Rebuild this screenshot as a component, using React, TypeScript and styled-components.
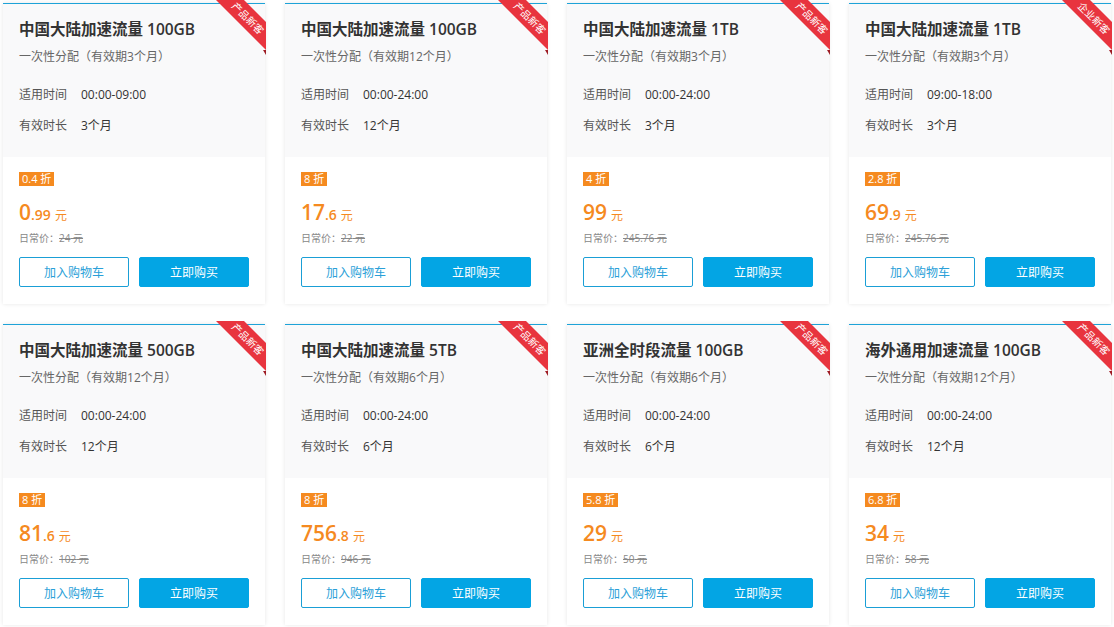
import styled, { createGlobalStyle } from "styled-components";

const GlobalStyle = createGlobalStyle`
  body {
    margin: 0;
    background: #fff;
    font-family: "Open Sans", "Noto Sans CJK SC", sans-serif;
  }
`;

const Grid = styled.div`
  padding: 3px;
  display: grid;
  grid-template-columns: repeat(4, 1fr);
  gap: 20px;
`;

const Card = styled.div`
  position: relative;
  background: #fff;
  border-top: 1px solid #1ea3d8;
  box-shadow: 0 0 4px rgba(0, 0, 0, 0.1);
`;

const Head = styled.div`
  background: #f9f9fa;
  padding: 13px 16px 22px;
`;

const Title = styled.h3`
  margin: 0;
  font-size: 15.5px;
  line-height: 24px;
  font-weight: 600;
  color: #333;
`;

const Sub = styled.div`
  margin-top: 7px;
  font-size: 12px;
  line-height: 18px;
  color: #666;
`;

const Specs = styled.div`
  margin-top: 20px;
  display: flex;
  flex-direction: column;
  gap: 13px;
`;

const Spec = styled.div`
  display: flex;
  font-size: 12px;
  line-height: 18px;
  color: #333;
`;

const SpecLabel = styled.span`
  width: 62px;
  color: #555;
`;

const Body = styled.div`
  padding: 15px 16px 17px;
`;

const Badge = styled.div`
  width: fit-content;
  background: #f58a1f;
  color: #fff;
  font-size: 11px;
  line-height: 14px;
  height: 14px;
  padding: 0 3px;
`;

const Price = styled.div`
  margin-top: 13px;
  color: #f58a1f;
  line-height: 26px;
  height: 26px;
`;

const PriceInt = styled.span`
  font-size: 21px;
  font-weight: 600;
`;

const PriceDec = styled.span`
  font-size: 14px;
  font-weight: 600;
`;

const Unit = styled.span`
  font-size: 12px;
  margin-left: 4px;
`;

const Orig = styled.div`
  margin-top: 6px;
  font-size: 10px;
  line-height: 14px;
  color: #888;
`;

const Actions = styled.div`
  margin-top: 12px;
  display: flex;
  gap: 10px;
`;

const Btn = styled.button<{ $primary?: boolean }>`
  flex: 1;
  height: 30px;
  border-radius: 2px;
  font-family: inherit;
  font-size: 12px;
  cursor: pointer;
  border: 1px solid ${(p) => (p.$primary ? "#03a5e4" : "#1a9fd6")};
  background: ${(p) => (p.$primary ? "#03a5e4" : "#fff")};
  color: ${(p) => (p.$primary ? "#fff" : "#2a9fd8")};
`;

/* diagonal corner ribbon, drawn as a clipped band */
const Ribbon = styled.div`
  position: absolute;
  top: -4px;
  right: -1px;
  width: 52px;
  height: 54px;
  background: #e8343e;
  clip-path: polygon(2px 0, 30px 0, 52px 22px, 52px 50px);
`;

const RibbonText = styled.span`
  position: absolute;
  left: 34px;
  top: 18px;
  white-space: nowrap;
  color: #fff;
  font-size: 10px;
  line-height: 12px;
  transform: translate(-50%, -50%) rotate(45deg);
`;

const Fold = styled.div`
  position: absolute;
  top: 46px;
  right: -1px;
  width: 0;
  height: 0;
  border-top: 5px solid #9e1c24;
  border-left: 3px solid transparent;
`;

interface IPlan {
  title: string;
  period: string;
  time: string;
  duration: string;
  discount: string;
  int: string;
  dec?: string;
  orig: string;
  tag: string;
}

const plans: IPlan[] = [
  { title: "中国大陆加速流量 100GB", period: "3个月", time: "00:00-09:00", duration: "3个月", discount: "0.4", int: "0", dec: ".99", orig: "24", tag: "产品新客" },
  { title: "中国大陆加速流量 100GB", period: "12个月", time: "00:00-24:00", duration: "12个月", discount: "8", int: "17", dec: ".6", orig: "22", tag: "产品新客" },
  { title: "中国大陆加速流量 1TB", period: "3个月", time: "00:00-24:00", duration: "3个月", discount: "4", int: "99", orig: "245.76", tag: "产品新客" },
  { title: "中国大陆加速流量 1TB", period: "3个月", time: "09:00-18:00", duration: "3个月", discount: "2.8", int: "69", dec: ".9", orig: "245.76", tag: "企业新客" },
  { title: "中国大陆加速流量 500GB", period: "12个月", time: "00:00-24:00", duration: "12个月", discount: "8", int: "81", dec: ".6", orig: "102", tag: "产品新客" },
  { title: "中国大陆加速流量 5TB", period: "6个月", time: "00:00-24:00", duration: "6个月", discount: "8", int: "756", dec: ".8", orig: "946", tag: "产品新客" },
  { title: "亚洲全时段流量 100GB", period: "6个月", time: "00:00-24:00", duration: "6个月", discount: "5.8", int: "29", orig: "50", tag: "产品新客" },
  { title: "海外通用加速流量 100GB", period: "12个月", time: "00:00-24:00", duration: "12个月", discount: "6.8", int: "34", orig: "58", tag: "产品新客" },
];

function PlanCard({ plan }: { plan: IPlan }) {
  return (
    <Card>
      <Ribbon>
        <RibbonText>{plan.tag}</RibbonText>
      </Ribbon>
      <Fold />
      <Head>
        <Title>{plan.title}</Title>
        <Sub>一次性分配（有效期{plan.period}）</Sub>
        <Specs>
          <Spec>
            <SpecLabel>适用时间</SpecLabel>
            {plan.time}
          </Spec>
          <Spec>
            <SpecLabel>有效时长</SpecLabel>
            {plan.duration}
          </Spec>
        </Specs>
      </Head>
      <Body>
        <Badge>{plan.discount} 折</Badge>
        <Price>
          <PriceInt>{plan.int}</PriceInt>
          {plan.dec && <PriceDec>{plan.dec}</PriceDec>}
          <Unit>元</Unit>
        </Price>
        <Orig>
          日常价：<s>{plan.orig} 元</s>
        </Orig>
        <Actions>
          <Btn>加入购物车</Btn>
          <Btn $primary>立即购买</Btn>
        </Actions>
      </Body>
    </Card>
  );
}

export default function App() {
  return (
    <>
      <GlobalStyle />
      <Grid>
        {plans.map((p, i) => (
          <PlanCard key={i} plan={p} />
        ))}
      </Grid>
    </>
  );
}
